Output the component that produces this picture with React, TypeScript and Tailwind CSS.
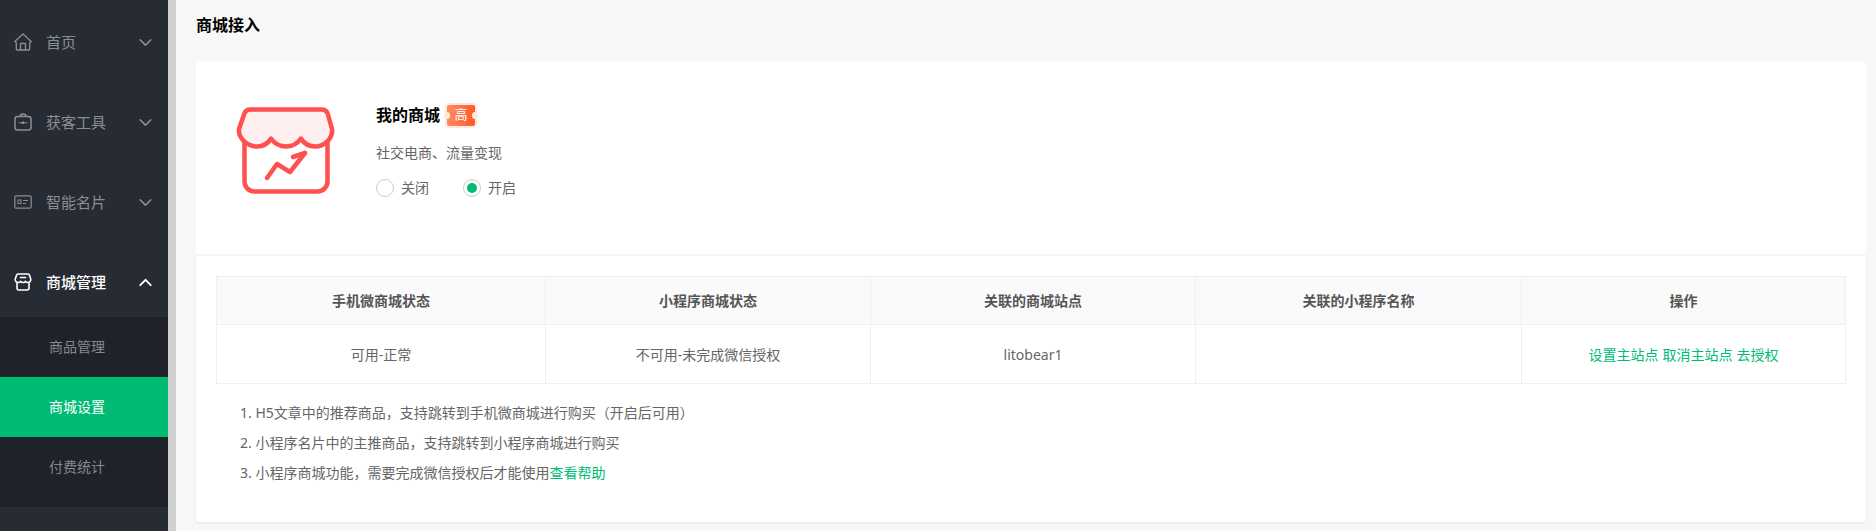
import { ChevronDown, ChevronUp } from "lucide-react";

const font = "font-['Noto_Sans','Noto_Sans_CJK_SC',sans-serif]";

function HomeIcon() {
  return (
    <svg viewBox="0 0 18 18" className="h-[18px] w-[18px]" fill="none" stroke="currentColor" strokeWidth="1.3" strokeLinejoin="round">
      <path d="M0.800 8.500 9 0.900l8.200 7.600-1.500 1.200v6.300a1 1 0 0 1-1 1H3.300a1 1 0 0 1-1-1V9.700z" />
      <path d="M6.500 17v-6.500h5V17" />
    </svg>
  );
}

function BagIcon() {
  return (
    <svg viewBox="0 0 18 18" className="h-[18px] w-[18px]" fill="none" stroke="currentColor" strokeWidth="1.500" strokeLinejoin="round">
      <rect x="1" y="3.500" width="16" height="13.500" rx="2.500" />
      <path d="M6 3.500C6 1.800 7 1 9 1s3 .8 3 2.500" />
      <path d="M4.500 9.800h9" strokeWidth="1" />
      <path d="M9 8.500v2.600" strokeWidth="2.200" />
    </svg>
  );
}

function CardIcon() {
  return (
    <svg viewBox="0 0 18 14" className="h-[14px] w-[18px]" fill="none" stroke="currentColor" strokeWidth="1.200">
      <rect x="0.800" y="0.800" width="16.400" height="12.400" rx="1.500" />
      <rect x="4" y="5" width="3" height="3.500" strokeWidth="1" />
      <path d="M9 5.500h5M9 8.500h3" strokeWidth="1" />
    </svg>
  );
}

function ShopIcon() {
  return (
    <svg viewBox="0 0 18 18" className="h-[18px] w-[18px]" fill="none" stroke="currentColor" strokeWidth="1.600" strokeLinejoin="round" strokeLinecap="round">
      <path d="M4 1h10a1.500 1.500 0 0 1 1.400 1l1.400 4.200c.2 2-1.300 3.300-3 3.300-1 0-1.900-.4-2.400-1.200C11 9.100 10 9.500 9 9.500S7 9.100 6.600 8.300C6.100 9.100 5.200 9.500 4.200 9.500c-1.700 0-3.200-1.300-3-3.300L2.600 2A1.500 1.500 0 0 1 4 1z" />
      <path d="M6.500 4.500h5M3 10.500v4.500a2 2 0 0 0 2 2h8a2 2 0 0 0 2-2v-4.500" />
    </svg>
  );
}

function StoreLogo() {
  return (
    <svg viewBox="0 0 101 91" className="mt-[2px] h-[91px] w-[101px] shrink-0" fill="none" stroke="#ff5050" strokeWidth="4.500" strokeLinejoin="round" strokeLinecap="round">
      <path d="M9.500 38V76a10 10 0 0 0 10 10.500H82.500a10 10 0 0 0 10-10.500V38" />
      <path
        fill="#fff0f0"
        d="M15 4.500H87a6 6 0 0 1 5.600 4L97 24c1 9-7 17.500-17 17.500-6 0-11-3-14-8-3.500 5-8.500 8-15 8s-11.500-3-15-8c-3 5-8 8-14 8C12 41.500 3 33 4 24l5.400-15.500a6 6 0 0 1 5.600-4z"
      />
      <path d="M32 73 42 59l13 8 15-19" />
      <path d="M58 52l12-4" />
    </svg>
  );
}

function Ticket() {
  return (
    <span className="relative ml-[7px] flex h-[21px] w-[28px] items-center justify-center overflow-visible rounded-[2px] bg-gradient-to-r from-[#ff8a5c] to-[#ff5a2c] text-[13px] font-normal text-white ring-2 ring-[#ffe9df]">
      高
      <span className="absolute left-[-3px] top-[7px] h-[7px] w-[6px] rounded-full bg-[#ffe9df]" />
      <span className="absolute right-[-3px] top-[7px] h-[7px] w-[6px] rounded-full bg-[#ffe9df]" />
    </span>
  );
}

const menus = [
  { label: "首页", icon: <HomeIcon /> },
  { label: "获客工具", icon: <BagIcon /> },
  { label: "智能名片", icon: <CardIcon /> },
];

const headers = ["手机微商城状态", "小程序商城状态", "关联的商城站点", "关联的小程序名称", "操作"];
const widths = ["w-[328px]", "w-[325px]", "w-[325px]", "w-[326px]", "w-[324px]"];

export default function App() {
  return (
    <div className={`flex h-[531px] w-[1876px] overflow-hidden bg-[#f7f7f7] ${font}`}>
      <aside className="flex w-[168px] shrink-0 flex-col bg-[#272b33] pt-[2px]">
        {menus.map((m) => (
          <div key={m.label} className="flex h-[80px] items-center pl-[14px] pr-[12px] text-[15px] text-[#8a8f96]">
            <span className="flex w-[18px] justify-center">{m.icon}</span>
            <span className="ml-[14px] flex-1">{m.label}</span>
            <ChevronDown size={21} strokeWidth={1.7} />
          </div>
        ))}
        <div className="flex h-[75px] items-center pl-[14px] pr-[12px] pt-[5px] text-[15px] font-medium text-white">
          <span className="flex w-[18px] justify-center"><ShopIcon /></span>
          <span className="ml-[14px] flex-1">商城管理</span>
          <ChevronUp size={21} strokeWidth={2.2} />
        </div>
        <div className="bg-[#1f2229] pb-[10px] text-[14px] text-[#85888e]">
          <div className="flex h-[60px] items-center pb-[2px] pl-[49px]">商品管理</div>
          <div className="flex h-[60px] items-center bg-[#00bb74] pb-[2px] pl-[49px] text-white">商城设置</div>
          <div className="flex h-[60px] items-center pb-[2px] pl-[49px]">付费统计</div>
        </div>
      </aside>
      <div className="w-[8px] shrink-0 bg-[#cfcfcf]" />
      <main className="flex min-w-0 flex-1 flex-col pl-[20px] pr-[10px]">
        <h1 className="flex h-[61px] items-start pt-[14px] text-[16px] font-bold leading-[22px] text-black">商城接入</h1>
        <section className="flex h-[193px] rounded-t-[4px] bg-white pl-[39px] pt-[42px]">
          <StoreLogo />
          <div className="ml-[40px] flex flex-col">
            <div className="flex h-[24px] items-center text-[16px] font-bold text-black">
              我的商城
              <Ticket />
            </div>
            <p className="mt-[16px] text-[14px] leading-[20px] text-[#666]">社交电商、流量变现</p>
            <div className="mt-[14px] flex items-center text-[14px] text-[#666]">
              <span className="h-[18px] w-[18px] rounded-full border border-[#ccc] bg-white" />
              <span className="ml-[7px] w-[28px]">关闭</span>
              <span className="ml-[34px] flex h-[18px] w-[18px] items-center justify-center rounded-full border border-[#ccc] bg-white">
                <span className="h-[10px] w-[10px] rounded-full bg-[#00bb74]" />
              </span>
              <span className="ml-[7px]">开启</span>
            </div>
          </div>
        </section>
        <section className="mt-[2px] h-[266px] rounded-b-[4px] bg-white px-[20px] pt-[20px] shadow-[0_1px_3px_rgba(0,0,0,0.08)]">
          <div className="flex h-[49px] border border-[#eeeef3] bg-[#fafafa] text-[14px] font-semibold text-[#555]">
            {headers.map((h, i) => (
              <div key={h} className={`flex shrink-0 items-center justify-center border-[#eeeef3] ${widths[i]} ${i > 0 ? "border-l" : ""}`}>{h}</div>
            ))}
          </div>
          <div className="flex h-[59px] border border-t-0 border-[#eeeef3] text-[14px] text-[#666]">
            <div className={`flex shrink-0 items-center justify-center ${widths[0]}`}>可用-正常</div>
            <div className={`flex shrink-0 items-center justify-center border-l border-[#eeeef3] ${widths[1]}`}>不可用-未完成微信授权</div>
            <div className={`flex shrink-0 items-center justify-center border-l border-[#eeeef3] ${widths[2]}`}>litobear1</div>
            <div className={`shrink-0 border-l border-[#eeeef3] ${widths[3]}`} />
            <div className={`flex shrink-0 items-center justify-center gap-[4px] border-l border-[#eeeef3] text-[#00bb74] ${widths[4]}`}>
              <span>设置主站点</span>
              <span>取消主站点</span>
              <span>去授权</span>
            </div>
          </div>
          <ol className="mt-[14px] pl-[24px] text-[14px] leading-[30px] text-[#666]">
            <li>1. H5文章中的推荐商品，支持跳转到手机微商城进行购买（开启后可用）</li>
            <li>2. 小程序名片中的主推商品，支持跳转到小程序商城进行购买</li>
            <li>3. 小程序商城功能，需要完成微信授权后才能使用<span className="text-[#00bb74]">查看帮助</span></li>
          </ol>
        </section>
      </main>
    </div>
  );
}
